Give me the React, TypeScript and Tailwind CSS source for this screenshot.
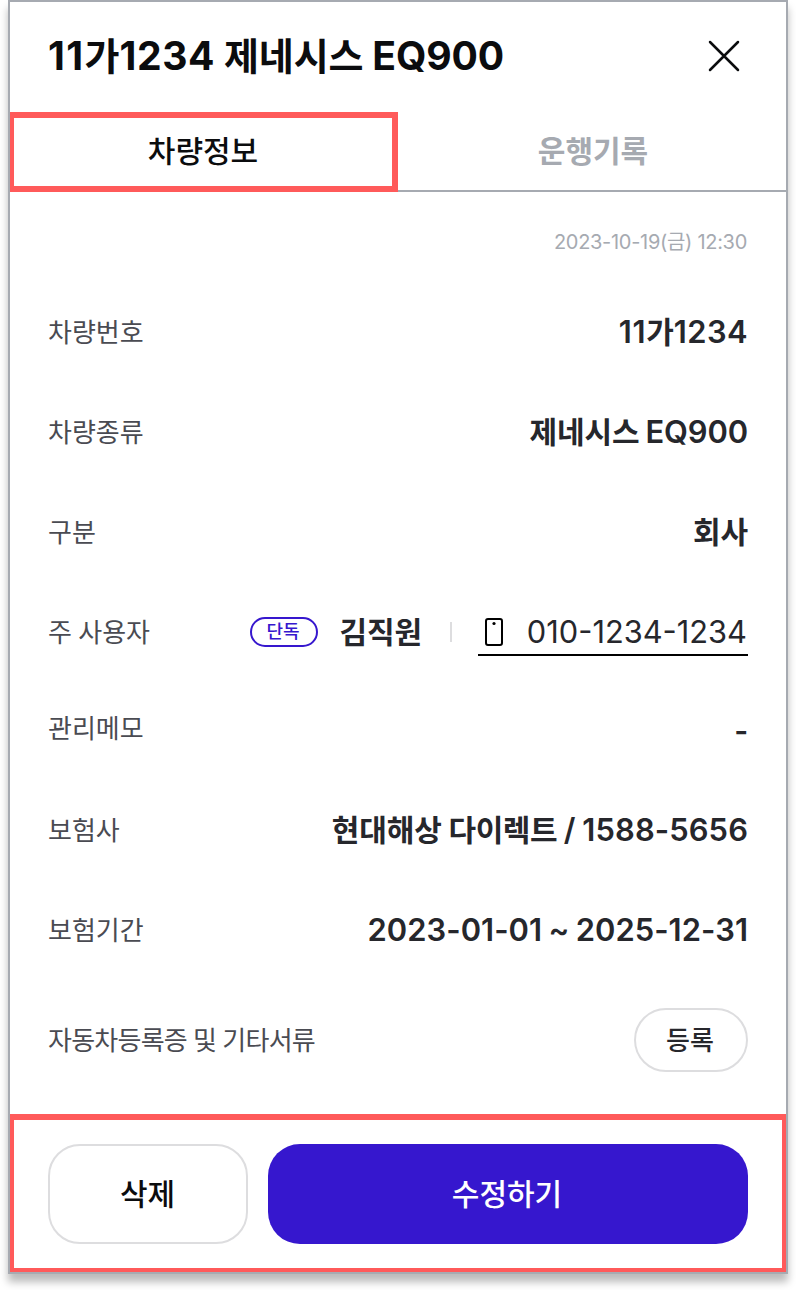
import type { ReactNode } from "react";

interface IRowProps {
    label: string;
    className: string;
    labelClassName?: string;
    children: ReactNode;
}

const Row = ({ label, className, labelClassName = "", children }: IRowProps) => (
    <div className={`flex items-center justify-between ${className}`}>
        <span className={`text-[26px] text-[#4a4b52] ${labelClassName}`}>{label}</span>
        {children}
    </div>
);

// Latin letters and digits are set slightly larger than the Hangul beside them
const Latin = ({ children }: { children: ReactNode }) => (
    <span className="text-[1.03em] leading-none">{children}</span>
);

const Value = ({ children }: { children: ReactNode }) => (
    <span className="text-[30px] font-semibold tracking-[-0.1px] [word-spacing:-1.5px] text-[#26272c]">{children}</span>
);

export default function App() {
    return (
        <div className="h-[1290px] w-[796px] overflow-hidden bg-white pl-2 whitespace-nowrap [font-family:Inter,'Noto_Sans_CJK_KR',sans-serif]">
            <div className="flex h-[1274px] w-[780px] flex-col border-2 border-[#a6aab1] bg-white shadow-[0_8px_8px_rgba(0,0,0,0.27)]">
                <header className="flex h-[110px] items-center justify-between pr-[46px] pb-0.5 pl-[38px]">
                    <h1 className="text-[38px] font-bold tracking-[-0.1px] text-[#0b0c0e]">
                        <Latin><span className="tracking-[1.4px]">11</span></Latin>가<Latin><span className="tracking-[0.6px]">1234</span></Latin> 제네시스 <Latin>EQ900</Latin>
                    </h1>
                    <svg width="32" height="32" viewBox="0 0 32 32" fill="none" stroke="#0b0c0e" strokeWidth="2.5" strokeLinecap="round">
                        <path d="M2 2L30 30M30 2L2 30" />
                    </svg>
                </header>

                <div className="flex h-20 text-[30px]">
                    <button className="h-20 w-[388px] border-6 border-l-4 border-[#ff5a5a] pb-0.5 font-medium text-[#0b0c0e]">차량정보</button>
                    <button className="h-20 flex-1 border-b-2 border-[#a6aab1] pl-0.5 font-semibold text-[#a6aab1]">운행기록</button>
                </div>

                <main className="flex flex-1 flex-col px-[38px]">
                    <div className="flex h-[90px] items-center justify-end pt-2.5 pr-px text-xl tracking-[-0.3px] text-[#a6aab1]">2023-10-19(금) 12:30</div>
                    <Row label="차량번호" className="h-[100px]">
                        <Value><Latin><span className="tracking-[0.8px]">11</span></Latin>가<Latin><span className="tracking-[0.4px]">1234</span></Latin></Value>
                    </Row>
                    <Row label="차량종류" className="h-[100px]"><Value>제네시스 <Latin>EQ900</Latin></Value></Row>
                    <Row label="구분" className="h-[100px]"><Value>회사</Value></Row>
                    <Row label="주 사용자" className="h-[100px]" labelClassName="[word-spacing:-1px]">
                        <div className="flex items-center">
                            <span className="mr-[22px] flex h-[30px] w-[68px] items-center justify-center rounded-full border-2 border-[#3617ce] pr-px text-lg font-medium text-[#3617ce]">단독</span>
                            <Value>김직원</Value>
                            <span className="mr-[26px] ml-[28px] h-5 w-0.5 bg-[#dddddf]" />
                            <a className="flex h-12 w-[270px] items-center justify-between border-b-2 border-black pr-px pl-1.5 text-[30.8px] text-[#26272c]">
                                <svg width="20" height="30" viewBox="0 0 20 30" fill="none" stroke="black" strokeWidth="2">
                                    <rect x="2" y="3" width="16" height="26" rx="2" />
                                    <circle cx="10" cy="7.5" r="1.6" fill="black" stroke="none" />
                                </svg>
                                <span className="pt-0.5">010-1234-1234</span>
                            </a>
                        </div>
                    </Row>
                    <Row label="관리메모" className="h-[92px]"><Value><span className="relative top-[3px]">-</span></Value></Row>
                    <Row label="보험사" className="h-[112px]">
                        <Value>
                            <span className="[word-spacing:-0.6px]">현대해상 <span className="tracking-[-0.5px]">다이렉트</span> <Latin>/</Latin> <Latin><span className="tracking-[0.1px]">1588-5656</span></Latin></span>
                        </Value>
                    </Row>
                    <Row label="보험기간" className="h-[88px]"><Value><Latin><span className="tracking-[0.05px]">2023-01-01 ~ 2025-12-31</span></Latin></Value></Row>
                    <Row label="자동차등록증 및 기타서류" className="h-[132px]" labelClassName="tracking-[-0.75px] [word-spacing:-0.5px]">
                        <button className="h-16 w-[114px] rounded-full border-2 border-[#dddddf] pr-0.5 text-[26px] font-medium text-[#26272c]">등록</button>
                    </Row>
                </main>

                <footer className="flex h-[158px] shrink-0 gap-5 border-4 border-t-6 border-[#ff5a5a] px-[34px] pt-6 text-[30px] font-medium">
                    <button className="h-[100px] w-[200px] rounded-[32px] border-2 border-[#dddddf] pr-px text-[#0b0c0e]">삭제</button>
                    <button className="h-[100px] flex-1 rounded-[32px] bg-[#3617ce] pr-0.5 text-white">수정하기</button>
                </footer>
            </div>
        </div>
    );
}
